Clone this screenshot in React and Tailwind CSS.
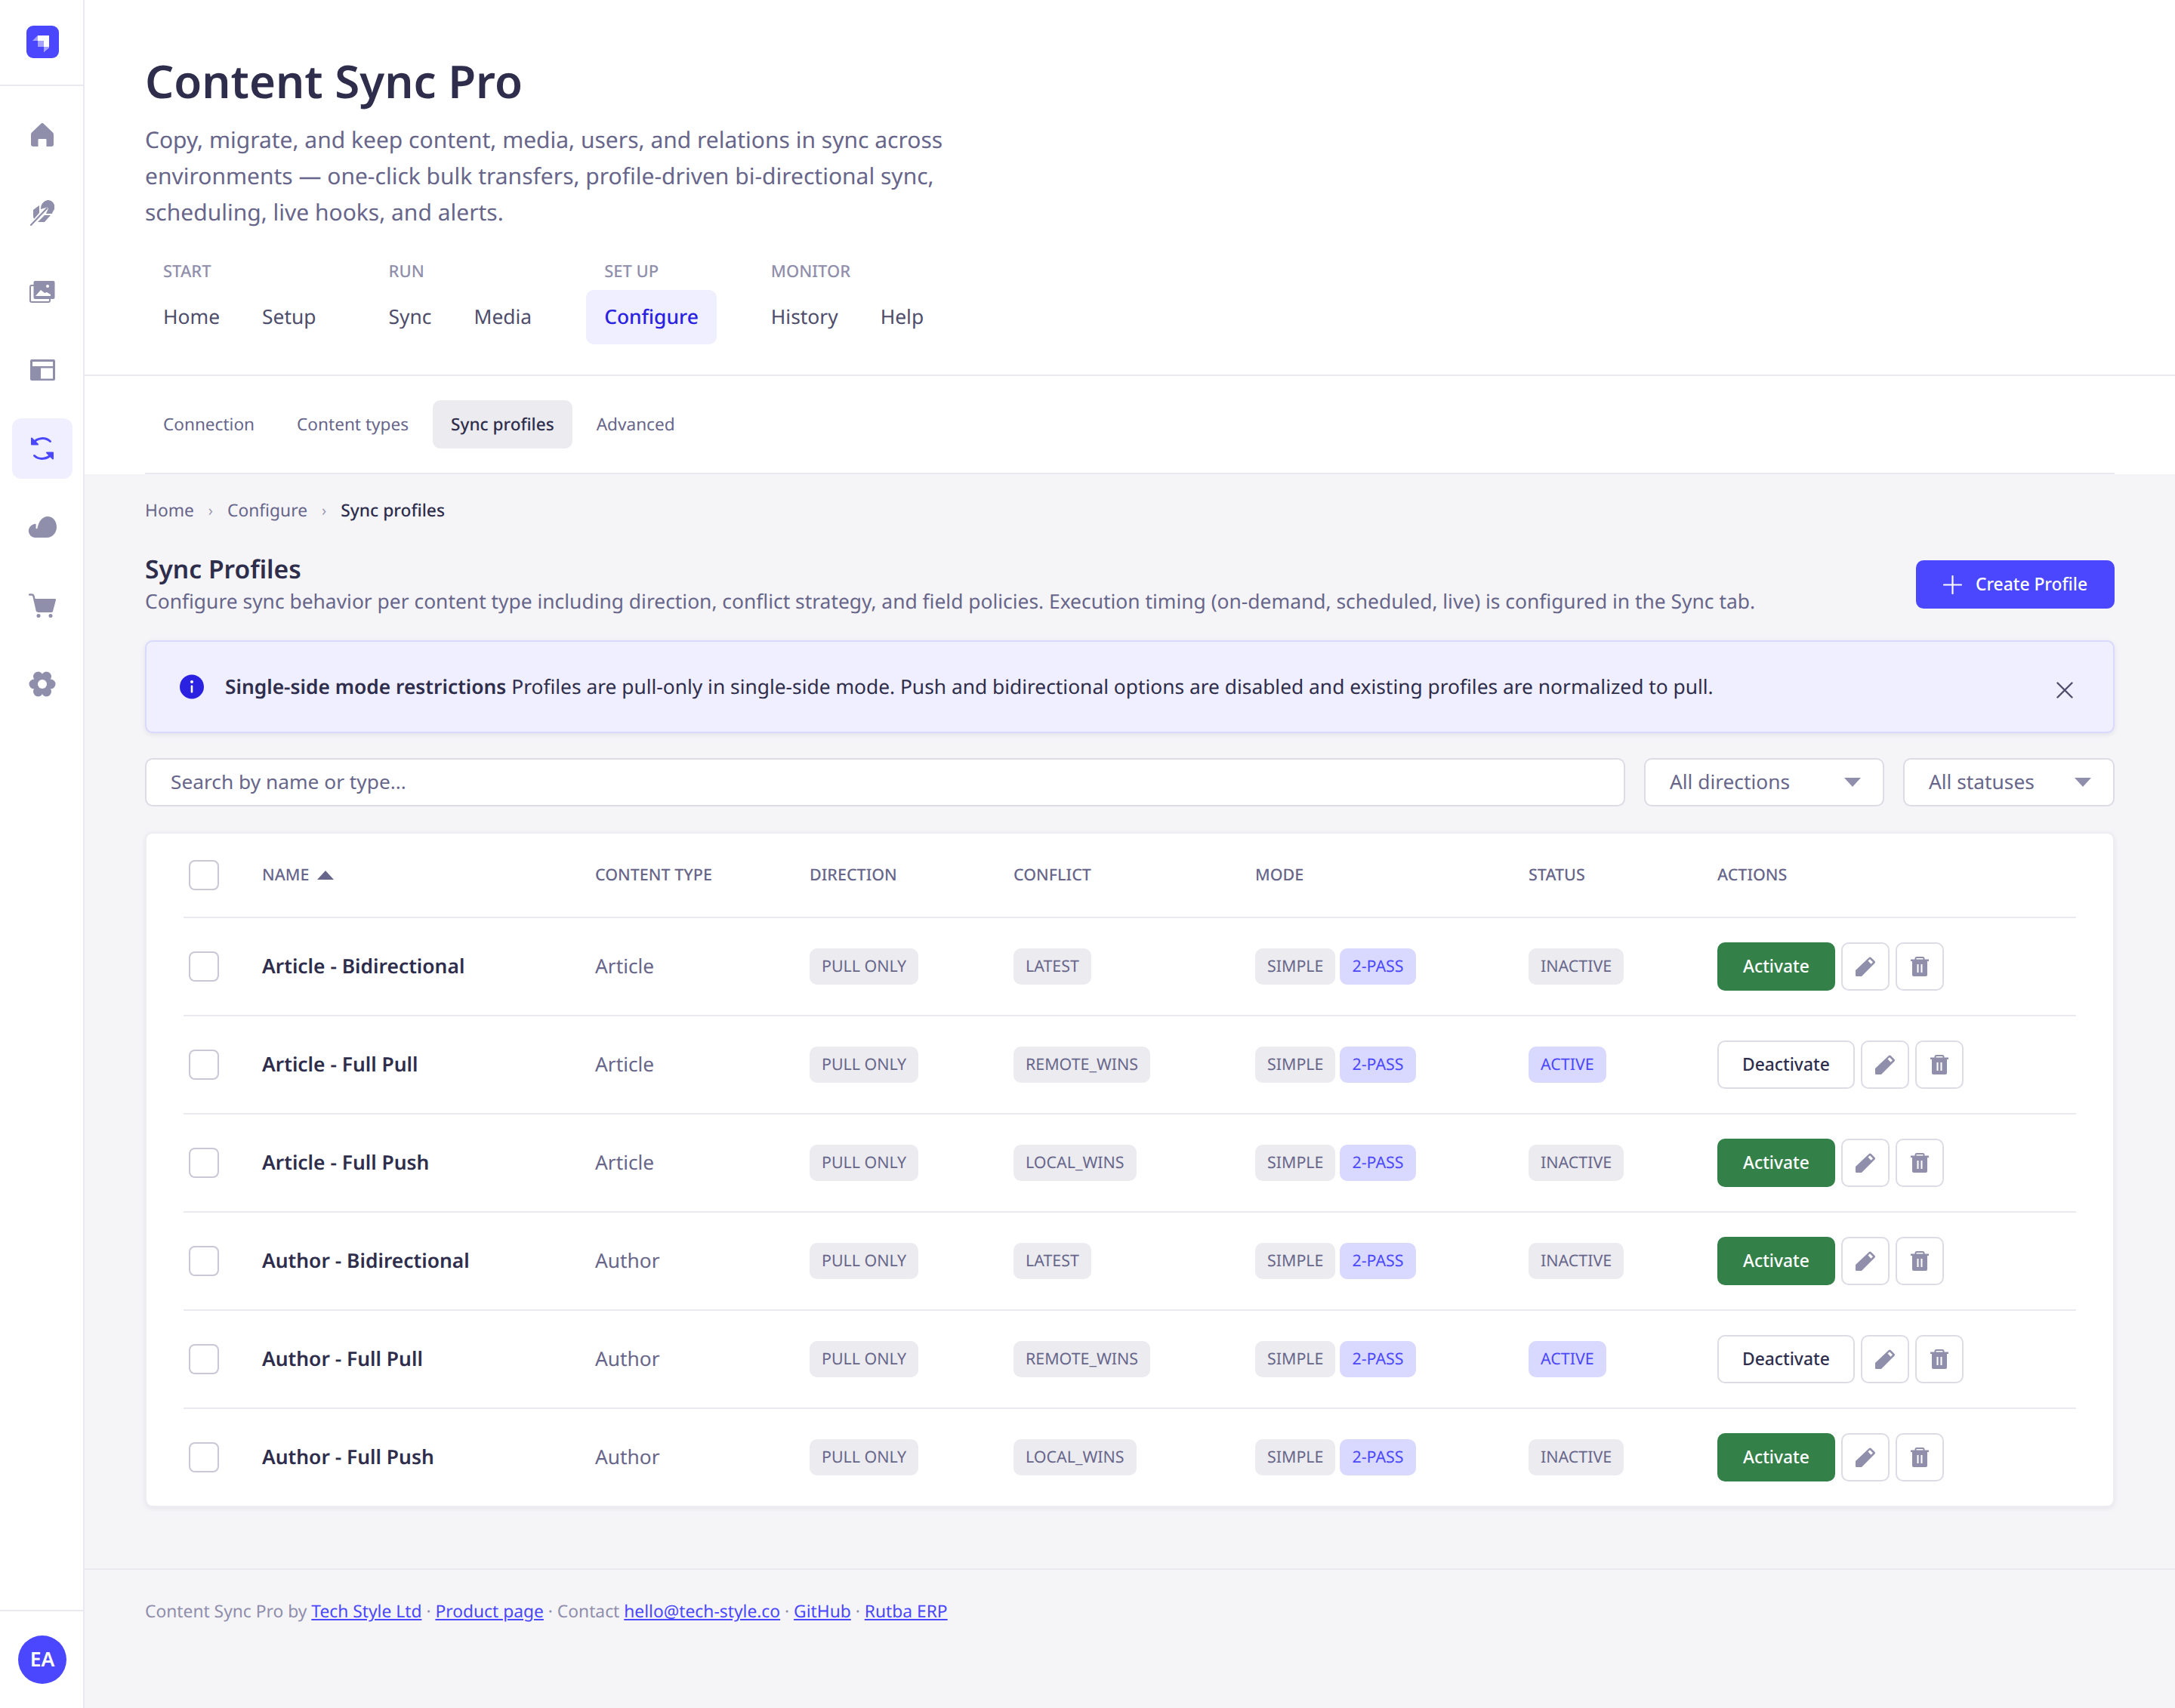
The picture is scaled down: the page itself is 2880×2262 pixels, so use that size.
const navGroups = [
  { label: "START", items: ["Home", "Setup"] },
  { label: "RUN", items: ["Sync", "Media"] },
  { label: "SET UP", items: ["Configure"] },
  { label: "MONITOR", items: ["History", "Help"] },
];

const profiles = [
  { name: "Article - Bidirectional", type: "Article", conflict: "LATEST", active: false },
  { name: "Article - Full Pull", type: "Article", conflict: "REMOTE_WINS", active: true },
  { name: "Article - Full Push", type: "Article", conflict: "LOCAL_WINS", active: false },
  { name: "Author - Bidirectional", type: "Author", conflict: "LATEST", active: false },
  { name: "Author - Full Pull", type: "Author", conflict: "REMOTE_WINS", active: true },
  { name: "Author - Full Push", type: "Author", conflict: "LOCAL_WINS", active: false },
];

const gridCols = "grid grid-cols-[104px_441px_284px_270px_320px_362px_250px_1fr] items-center";

const Logo = () => (
  <svg width="43" height="43" viewBox="0 0 43 43">
    <rect width="43" height="43" rx="9" fill="#4a47ff" />
    <path d="M8 20l7-7v7z" fill="#a5a3ff" />
    <path d="M15 20h8v8h-8z" fill="#a5a3ff" />
    <path d="M15 13h15v16l-7 6V20h-8z" fill="#fff" />
    <path d="M23 35l7-6v-1h-7z" fill="#a5a3ff" />
  </svg>
);

const HomeIcon = () => (
  <svg width="30" height="31" viewBox="0 0 30 31" fill="#8f8eab">
    <path d="M13.600.6a2 2 0 0 1 2.800 0l12 11.500a4 4 0 0 1 1.600 3V28a3 3 0 0 1-3 3h-6.500v-9a1 1 0 0 0-1-1h-9a1 1 0 0 0-1 1v9H3a3 3 0 0 1-3-3V15a4 4 0 0 1 1.600-3z" />
  </svg>
);

const FeatherIcon = () => (
  <svg width="32" height="34" viewBox="0 0 32 34" fill="#8f8eab">
    <path d="M14 12A11 11 0 0 1 23 0a9 9 0 0 1 7 15l-1 3H21l3-7-1.500-1.500z" />
    <path d="M12 7L4 13v9l1 3 7-8z" />
    <path d="M27 20H19l-9 9h9z" />
    <path d="M1 33L22 11" stroke="#8f8eab" strokeWidth="2.200" strokeLinecap="round" />
  </svg>
);

const ImagesIcon = () => (
  <svg width="34" height="29" viewBox="0 0 34 29">
    <rect x="1" y="6" width="26" height="22" rx="2" fill="none" stroke="#8f8eab" strokeWidth="2" />
    <rect x="5.500" y="0" width="28" height="24" rx="2" fill="#8f8eab" />
    <path d="M8 20l7-8 5 4 3-1 5 3v2z" fill="#fff" />
    <circle cx="24" cy="7" r="2" fill="#fff" />
  </svg>
);

const LayoutIcon = () => (
  <svg width="33" height="28" viewBox="0 0 33 28">
    <rect width="33" height="28" rx="2" fill="#8f8eab" />
    <rect x="3" y="3" width="27" height="6" fill="#fff" />
    <rect x="14" y="11.500" width="16" height="14" fill="#fff" />
  </svg>
);

const SyncIcon = () => (
  <svg width="32" height="32" viewBox="0 0 32 32" fill="#4a47ff">
    <path d="M26.500 6.500C20 .5 9 1.500 3.500 9" fill="none" stroke="#4a47ff" strokeWidth="3" strokeLinecap="round" />
    <path d="M1 2.500a1 1 0 0 1 1.700-.7l8 8a1 1 0 0 1-.7 1.700H2a1 1 0 0 1-1-1z" />
    <path d="M5.500 25.500C12 31.500 23 30.500 28.500 23" fill="none" stroke="#4a47ff" strokeWidth="3" strokeLinecap="round" />
    <path d="M31 29.500a1 1 0 0 1-1.700.7l-8-8a1 1 0 0 1 .7-1.700h8a1 1 0 0 1 1 1z" />
  </svg>
);

const CloudIcon = () => (
  <svg width="38" height="28" viewBox="0 0 38 28" fill="#8f8eab">
    <path d="M9 28A9 9 0 0 1 7 10.500c1-.5 3-1 3.500-.3.500.5 0 3 0 5 0 1.200 1.500 1.500 2 .3C14 7 19 0 26 0c7 0 12 6 12 14 0 8-6 14-13 14z" />
  </svg>
);

const CartIcon = () => (
  <svg width="36" height="32" viewBox="0 0 36 32" fill="#8f8eab">
    <path d="M1 1.500h3q2 0 2.500 2L11 23" fill="none" stroke="#8f8eab" strokeWidth="2.500" strokeLinecap="round" />
    <path d="M8 7h26.500a1.500 1.500 0 0 1 1.400 1.900L32 23.500a2 2 0 0 1-2 1.500H13a2 2 0 0 1-2-1.500z" />
    <circle cx="13" cy="29.500" r="2.500" />
    <circle cx="29" cy="29.500" r="2.500" />
  </svg>
);

const GearIcon = () => (
  <svg width="36" height="34" viewBox="0 0 36 34" fill="#8f8eab">
    <circle cx="18" cy="17" r="12" />
    <circle cx="29" cy="17" r="6.500" />
    <circle cx="7" cy="17" r="6.500" />
    <circle cx="23.500" cy="7" r="6.500" />
    <circle cx="12.500" cy="7" r="6.500" />
    <circle cx="23.500" cy="27" r="6.500" />
    <circle cx="12.500" cy="27" r="6.500" />
    <circle cx="18" cy="17" r="6" fill="#fff" />
  </svg>
);

const PencilIcon = () => (
  <svg width="26" height="26" viewBox="0 0 26 26">
    <path d="M0 25V18L18 1a2 2 0 0 1 2.500 0l5 5a2 2 0 0 1 0 2.500L8 26H1a1 1 0 0 1-1-1z" fill="#8f8eab" />
    <path d="M16.500 5.500L19 3.200l4 4-2.500 2.500z" fill="#fff" />
  </svg>
);

const TrashIcon = () => (
  <svg width="24" height="26" viewBox="0 0 24 26">
    <path d="M6.500 4V2.500A1.500 1.500 0 0 1 8 1h8a1.500 1.500 0 0 1 1.500 1.500V4" fill="none" stroke="#8f8eab" strokeWidth="2" />
    <rect y="3.500" width="24" height="2.500" fill="#8f8eab" />
    <path d="M2 6h20v18a2 2 0 0 1-2 2H4a2 2 0 0 1-2-2z" fill="#8f8eab" />
    <rect x="8.500" y="10" width="2" height="11" fill="#fff" />
    <rect x="13.500" y="10" width="2" height="11" fill="#fff" />
  </svg>
);

const InfoIcon = () => (
  <svg width="32" height="33" viewBox="0 0 32 33">
    <circle cx="16" cy="16.500" r="16" fill="#2a22e0" />
    <circle cx="16" cy="10" r="2" fill="#fff" />
    <rect x="14.700" y="14.500" width="2.600" height="10" rx="1" fill="#fff" />
  </svg>
);

const PlusIcon = () => (
  <svg width="25" height="25" viewBox="0 0 25 25" stroke="#fff" strokeWidth="2.200" strokeLinecap="round">
    <path d="M12.500 1v23M1 12.500h23" />
  </svg>
);

const CloseIcon = () => (
  <svg width="22" height="22" viewBox="0 0 22 22" stroke="#4e4d6b" strokeWidth="2.400" strokeLinecap="round">
    <path d="M1.500 1.500l19 19M20.500 1.500l-19 19" />
  </svg>
);

const Caret = ({ up, color }) => (
  <svg width="22" height="12" viewBox="0 0 22 12" fill={color}>
    <path d={up ? "M11 0l11 12H0z" : "M0 0h22L11 12z"} />
  </svg>
);

const sideItems = [
  { icon: <HomeIcon /> },
  { icon: <FeatherIcon /> },
  { icon: <ImagesIcon /> },
  { icon: <LayoutIcon /> },
  { icon: <SyncIcon />, active: true },
  { icon: <CloudIcon /> },
  { icon: <CartIcon /> },
  { icon: <GearIcon /> },
];

const Badge = ({ children, blue }) => (
  <span
    className={`inline-flex h-[48px] items-center rounded-[10px] px-[16px] text-[21.400px] ${
      blue ? "bg-[#d9d8ff] text-[#4a47ff]" : "bg-[#ebebf0] text-[#67668a]"
    }`}
  >
    {children}
  </span>
);

const Checkbox = () => (
  <span className="ml-[7px] block h-[40px] w-[40px] rounded-[8px] border-2 border-[#c9c8d6] bg-white" />
);

const IconButton = ({ children }) => (
  <button className="flex h-[64px] w-[64px] items-center justify-center rounded-[10px] border-2 border-[#dddce5] bg-white">
    {children}
  </button>
);

const Sidebar = () => (
  <aside className="flex w-[112px] shrink-0 flex-col border-r-2 border-[#e9e9ef] bg-white">
    <div className="flex h-[114px] shrink-0 items-start justify-center border-b-2 border-[#e9e9ef] pt-[34px] pl-[2px]">
      <Logo />
    </div>
    <nav className="flex flex-col items-center gap-[24px] pt-[24px] pl-[2px]">
      {sideItems.map((item, i) => (
        <div
          key={i}
          className={`flex h-[80px] w-[80px] items-center justify-center rounded-[12px] ${
            item.active ? "bg-[#f0efff]" : ""
          }`}
        >
          {item.icon}
        </div>
      ))}
    </nav>
    <div className="mt-auto flex h-[130px] items-center justify-center border-t-2 border-[#e9e9ef] pl-[2px]">
      <div className="flex h-[64px] w-[64px] items-center justify-center rounded-full bg-[#4a47ff] text-[26.500px] font-semibold text-white">
        EA
      </div>
    </div>
  </aside>
);

const Header = () => (
  <header className="border-b-2 border-[#e9e9ef] bg-white px-[80px] pt-[71px] pb-[40px]">
    <h1 className="text-[60px] leading-[72px] font-semibold text-[#2e2e4c]">Content Sync Pro</h1>
    <p className="mt-[18px] max-w-[1120px] text-[30px] leading-[48px] text-[#67668a]">
      Copy, migrate, and keep content, media, users, and relations in sync across environments — one-click
      bulk transfers, profile-driven bi-directional sync, scheduling, live hooks, and alerts.
    </p>
    <div className="mt-[38px] flex gap-[48px]">
      {navGroups.map((group) => (
        <div key={group.label}>
          <div className="pl-[24px] text-[22px] leading-[32px] font-medium text-[#8f8eab]">{group.label}</div>
          <div className="mt-[9px] flex gap-[8px]">
            {group.items.map((item) => (
              <a
                key={item}
                className={`flex h-[72px] items-center rounded-[10px] px-[24px] text-[26.400px] ${
                  item === "Configure" ? "bg-[#f0efff] font-medium text-[#2a22e0]" : "text-[#4e4d6b]"
                }`}
              >
                {item}
              </a>
            ))}
          </div>
        </div>
      ))}
    </div>
  </header>
);

const Tabs = () => (
  <div className="bg-white px-[80px]">
    <div className="flex gap-[8px] border-b-2 border-[#e9e9ef] pt-[32px] pb-[32px]">
      {["Connection", "Content types", "Sync profiles", "Advanced"].map((tab) => (
        <a
          key={tab}
          className={`flex h-[64px] items-center rounded-[10px] px-[24px] text-[22.600px] ${
            tab === "Sync profiles" ? "bg-[#ebebf0] font-medium text-[#2e2e4c]" : "text-[#67668a]"
          }`}
        >
          {tab}
        </a>
      ))}
    </div>
  </div>
);

const ProfilesTable = () => (
  <div className="mt-[34px] rounded-[10px] border-2 border-[#ededf2] bg-white px-[49px] shadow-[0_2px_6px_rgba(46,46,76,0.08)]">
    <div className={`${gridCols} h-[112px] border-b-2 border-[#e9e9ef] text-[21.500px] font-medium text-[#67668a]`}>
      <Checkbox />
      <div className="flex items-center gap-[11px]">
        NAME <Caret up color="#67668a" />
      </div>
      <div>CONTENT TYPE</div>
      <div>DIRECTION</div>
      <div>CONFLICT</div>
      <div>MODE</div>
      <div>STATUS</div>
      <div>ACTIONS</div>
    </div>
    {profiles.map((p, i) => (
      <div
        key={p.name}
        className={`${gridCols} ${i < profiles.length - 1 ? "h-[130px] border-b-2 border-[#e9e9ef]" : "h-[128px]"}`}
      >
        <Checkbox />
        <div className="text-[26.400px] font-semibold text-[#2e2e4c]">{p.name}</div>
        <div className="text-[26.300px] text-[#67668a]">{p.type}</div>
        <div>
          <Badge>PULL ONLY</Badge>
        </div>
        <div>
          <Badge>{p.conflict}</Badge>
        </div>
        <div className="flex gap-[6px]">
          <Badge>SIMPLE</Badge>
          <Badge blue>2-PASS</Badge>
        </div>
        <div>
          <Badge blue={p.active}>{p.active ? "ACTIVE" : "INACTIVE"}</Badge>
        </div>
        <div className="flex gap-[8px]">
          {p.active ? (
            <button className="h-[64px] rounded-[10px] border-2 border-[#dddce5] bg-white px-[31px] text-[22.800px] font-medium text-[#2e2e4c]">
              Deactivate
            </button>
          ) : (
            <button className="h-[64px] rounded-[10px] bg-[#348049] px-[34px] text-[22.800px] font-medium text-white">
              Activate
            </button>
          )}
          <IconButton>
            <PencilIcon />
          </IconButton>
          <IconButton>
            <TrashIcon />
          </IconButton>
        </div>
      </div>
    ))}
  </div>
);

const App = () => (
  <div className="flex min-h-[2262px] bg-[#f5f5f8] font-['Noto_Sans',sans-serif] [text-rendering:geometricPrecision]">
    <Sidebar />
    <div className="flex min-w-0 flex-1 flex-col">
      <Header />
      <Tabs />
      <main className="px-[80px] pt-[30px]">
        <div className="flex items-center gap-[19px] text-[22.800px] leading-[36px] text-[#67668a]">
          <span>Home</span>
          <span className="text-[20px] text-[#9b9ab2]">›</span>
          <span>Configure</span>
          <span className="text-[20px] text-[#9b9ab2]">›</span>
          <span className="font-medium text-[#2e2e4c]">Sync profiles</span>
        </div>
        <div className="mt-[37px] flex items-center justify-between">
          <div>
            <h2 className="text-[33.600px] leading-[44px] font-semibold text-[#2e2e4c]">Sync Profiles</h2>
            <p className="text-[26.400px] leading-[42px] text-[#67668a]">
              Configure sync behavior per content type including direction, conflict strategy, and field policies.
              Execution timing (on-demand, scheduled, live) is configured in the Sync tab.
            </p>
          </div>
          <button className="flex h-[64px] items-center gap-[18px] rounded-[10px] bg-[#4a47ff] px-[36px] text-[22.800px] font-medium text-white">
            <PlusIcon />
            Create Profile
          </button>
        </div>
        <div className="mt-[31px] flex h-[123px] items-center justify-between rounded-[10px] border-2 border-[#d9d8ff] bg-[#f0efff] pr-[53px] pl-[44px] shadow-[0_2px_6px_rgba(46,46,76,0.1)]">
          <div className="flex items-center gap-[28px] text-[26.350px] text-[#2e2e4c]">
            <InfoIcon />
            <div>
              <span className="font-semibold">Single-side mode restrictions</span> Profiles are pull-only in
              single-side mode. Push and bidirectional options are disabled and existing profiles are normalized to
              pull.
            </div>
          </div>
          <div className="pt-[8px]">
            <CloseIcon />
          </div>
        </div>
        <div className="mt-[33px] flex h-[64px] gap-[25px]">
          <input
            placeholder="Search by name or type..."
            className="min-w-0 flex-1 rounded-[10px] border-2 border-[#dddce5] bg-white px-[32px] text-[26.300px] text-[#2e2e4c] placeholder:text-[#67668a]"
          />
          <div className="flex w-[318px] items-center justify-between rounded-[10px] border-2 border-[#dddce5] bg-white pr-[29px] pl-[32px] text-[26.300px] text-[#67668a]">
            All directions
            <Caret color="#8f8eab" />
          </div>
          <div className="flex w-[280px] items-center justify-between rounded-[10px] border-2 border-[#dddce5] bg-white pr-[29px] pl-[32px] text-[26.300px] text-[#67668a]">
            All statuses
            <Caret color="#8f8eab" />
          </div>
        </div>
        <ProfilesTable />
      </main>
      <footer className="mt-[81px] border-t-2 border-[#e9e9ef] px-[80px] pt-[37px] text-[22.800px] leading-[36px] text-[#8f8eab]">
        Content Sync Pro by <a className="text-[#4a47ff] underline">Tech Style Ltd</a> ·{" "}
        <a className="text-[#4a47ff] underline">Product page</a> · Contact{" "}
        <a className="text-[#4a47ff] underline">hello@tech-style.co</a> ·{" "}
        <a className="text-[#4a47ff] underline">GitHub</a> · <a className="text-[#4a47ff] underline">Rutba ERP</a>
      </footer>
    </div>
  </div>
);

export default App;
